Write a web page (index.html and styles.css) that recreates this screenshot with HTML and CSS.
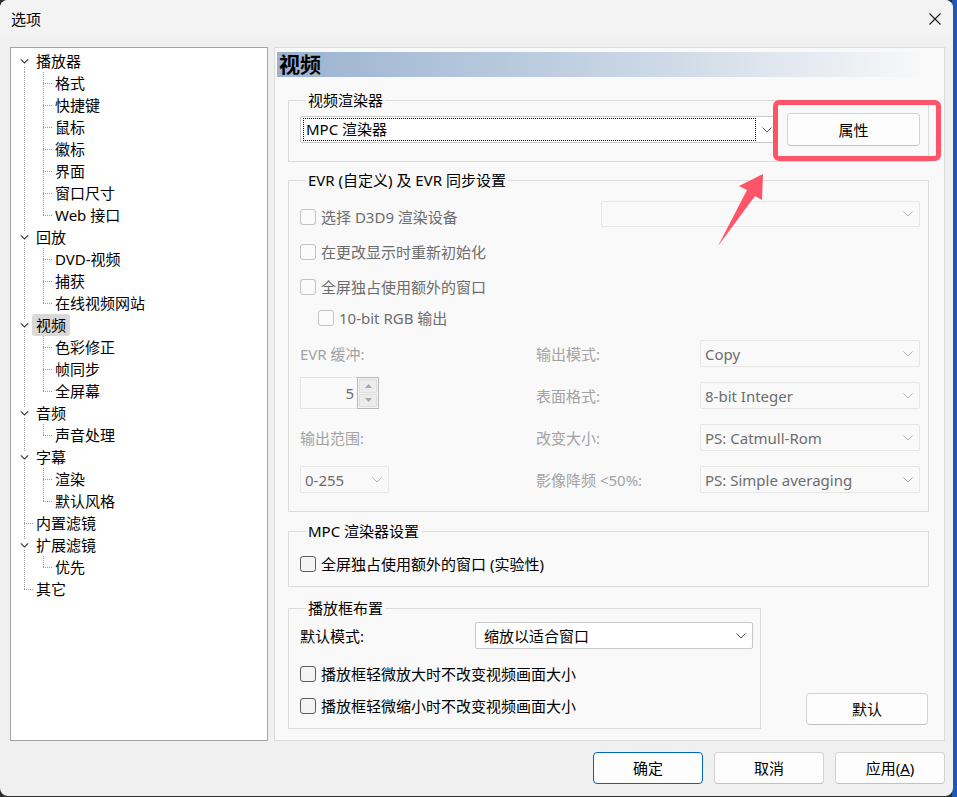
FILE: index.html
```html
<!DOCTYPE html>
<html lang="zh-CN">
<head>
<meta charset="utf-8">
<title>选项</title>
<link rel="stylesheet" href="styles.css">
</head>
<body>
<div class="window">
  <div class="titlebar">
    <span class="title">选项</span>
    <svg class="close" width="12" height="12" viewBox="0 0 12 12"><path d="M0.5 0.5 L11.5 11.5 M11.5 0.5 L0.5 11.5" stroke="#1a1a1a" stroke-width="1.1" fill="none"/></svg>
  </div>

  <div class="main">
    <div class="tree">
      <div class="row r-exp first"><span class="gut"><svg class="chev" width="9" height="10" viewBox="0 0 9 10"><path d="M0.8 3.3 L4.5 7 L8.2 3.3" stroke="#3c3c3c" stroke-width="1.2" fill="none"/></svg></span><span class="lbl">播放器</span></div>
      <div class="row r-child"><span class="lbl">格式</span></div>
      <div class="row r-child"><span class="lbl">快捷键</span></div>
      <div class="row r-child"><span class="lbl">鼠标</span></div>
      <div class="row r-child"><span class="lbl">徽标</span></div>
      <div class="row r-child"><span class="lbl">界面</span></div>
      <div class="row r-child"><span class="lbl">窗口尺寸</span></div>
      <div class="row r-child last"><span class="lbl">Web 接口</span></div>
      <div class="row r-exp"><span class="gut"><svg class="chev" width="9" height="10" viewBox="0 0 9 10"><path d="M0.8 3.3 L4.5 7 L8.2 3.3" stroke="#3c3c3c" stroke-width="1.2" fill="none"/></svg></span><span class="lbl">回放</span></div>
      <div class="row r-child"><span class="lbl">DVD-视频</span></div>
      <div class="row r-child"><span class="lbl">捕获</span></div>
      <div class="row r-child last"><span class="lbl">在线视频网站</span></div>
      <div class="row r-exp sel"><span class="gut"><svg class="chev" width="9" height="10" viewBox="0 0 9 10"><path d="M0.8 3.3 L4.5 7 L8.2 3.3" stroke="#3c3c3c" stroke-width="1.2" fill="none"/></svg></span><span class="lbl">视频</span></div>
      <div class="row r-child"><span class="lbl">色彩修正</span></div>
      <div class="row r-child"><span class="lbl">帧同步</span></div>
      <div class="row r-child last"><span class="lbl">全屏幕</span></div>
      <div class="row r-exp"><span class="gut"><svg class="chev" width="9" height="10" viewBox="0 0 9 10"><path d="M0.8 3.3 L4.5 7 L8.2 3.3" stroke="#3c3c3c" stroke-width="1.2" fill="none"/></svg></span><span class="lbl">音频</span></div>
      <div class="row r-child last"><span class="lbl">声音处理</span></div>
      <div class="row r-exp"><span class="gut"><svg class="chev" width="9" height="10" viewBox="0 0 9 10"><path d="M0.8 3.3 L4.5 7 L8.2 3.3" stroke="#3c3c3c" stroke-width="1.2" fill="none"/></svg></span><span class="lbl">字幕</span></div>
      <div class="row r-child"><span class="lbl">渲染</span></div>
      <div class="row r-child last"><span class="lbl">默认风格</span></div>
      <div class="row r-leaf"><span class="lbl">内置滤镜</span></div>
      <div class="row r-exp"><span class="gut"><svg class="chev" width="9" height="10" viewBox="0 0 9 10"><path d="M0.8 3.3 L4.5 7 L8.2 3.3" stroke="#3c3c3c" stroke-width="1.2" fill="none"/></svg></span><span class="lbl">扩展滤镜</span></div>
      <div class="row r-child last"><span class="lbl">优先</span></div>
      <div class="row r-leaf end"><span class="lbl">其它</span></div>
    </div>

    <div class="page">
      <div class="page-header">视频</div>

      <fieldset class="group g-renderer">
        <legend>视频渲染器</legend>
        <div class="renderer-row">
          <div class="combo combo-white combo-main">
            <span class="focus-text">MPC 渲染器</span>
            <svg class="chevron" width="10" height="6" viewBox="0 0 10 6"><path d="M0.5 0.5 L5 5 L9.5 0.5" stroke="#606060" stroke-width="1" fill="none"/></svg>
          </div>
          <button class="btn btn-prop">属性</button>
        </div>
      </fieldset>

      <fieldset class="group g-evr">
        <legend>EVR (自定义) 及 EVR 同步设置</legend>
        <div class="evr-row1">
          <label class="check dis"><span class="box"></span>选择 D3D9 渲染设备</label>
          <div class="combo combo-dis combo-d3d">
            <span class="combo-text"></span>
            <svg class="chevron" width="10" height="6" viewBox="0 0 10 6"><path d="M0.5 0.5 L5 5 L9.5 0.5" stroke="#b4b4b4" stroke-width="1" fill="none"/></svg>
          </div>
        </div>
        <label class="check dis c2"><span class="box"></span>在更改显示时重新初始化</label>
        <label class="check dis c3"><span class="box"></span>全屏独占使用额外的窗口</label>
        <label class="check dis c4"><span class="box"></span>10-bit RGB 输出</label>

        <div class="evr-grid">
          <span class="slabel">EVR 缓冲:</span>
          <span class="slabel">输出模式:</span>
          <div class="combo combo-dis"><span class="combo-text">Copy</span><svg class="chevron" width="10" height="6" viewBox="0 0 10 6"><path d="M0.5 0.5 L5 5 L9.5 0.5" stroke="#b4b4b4" stroke-width="1" fill="none"/></svg></div>

          <div class="spin">
            <span class="spin-val">5</span>
            <span class="spin-btns">
              <span class="sb"><svg width="7" height="4" viewBox="0 0 7 4"><path d="M0 4 L3.5 0 L7 4 Z" fill="#a8a8a8"/></svg></span>
              <span class="sb"><svg width="7" height="4" viewBox="0 0 7 4"><path d="M0 0 L3.5 4 L7 0 Z" fill="#a8a8a8"/></svg></span>
            </span>
          </div>
          <span class="slabel">表面格式:</span>
          <div class="combo combo-dis"><span class="combo-text">8-bit Integer</span><svg class="chevron" width="10" height="6" viewBox="0 0 10 6"><path d="M0.5 0.5 L5 5 L9.5 0.5" stroke="#b4b4b4" stroke-width="1" fill="none"/></svg></div>

          <span class="slabel">输出范围:</span>
          <span class="slabel">改变大小:</span>
          <div class="combo combo-dis"><span class="combo-text">PS: Catmull-Rom</span><svg class="chevron" width="10" height="6" viewBox="0 0 10 6"><path d="M0.5 0.5 L5 5 L9.5 0.5" stroke="#b4b4b4" stroke-width="1" fill="none"/></svg></div>

          <div class="combo combo-dis combo-range"><span class="combo-text">0-255</span><svg class="chevron" width="10" height="6" viewBox="0 0 10 6"><path d="M0.5 0.5 L5 5 L9.5 0.5" stroke="#b4b4b4" stroke-width="1" fill="none"/></svg></div>
          <span class="slabel">影像降频 &lt;50%:</span>
          <div class="combo combo-dis"><span class="combo-text">PS: Simple averaging</span><svg class="chevron" width="10" height="6" viewBox="0 0 10 6"><path d="M0.5 0.5 L5 5 L9.5 0.5" stroke="#b4b4b4" stroke-width="1" fill="none"/></svg></div>
        </div>
      </fieldset>

      <fieldset class="group g-mpc">
        <legend>MPC 渲染器设置</legend>
        <label class="check"><span class="box"></span>全屏独占使用额外的窗口 (实验性)</label>
      </fieldset>

      <div class="bottom-row">
        <fieldset class="group g-layout">
          <legend>播放框布置</legend>
          <div class="layout-row">
            <span class="flabel">默认模式:</span>
            <div class="combo combo-white combo-mode">
              <span class="combo-text">缩放以适合窗口</span>
              <svg class="chevron" width="10" height="6" viewBox="0 0 10 6"><path d="M0.5 0.5 L5 5 L9.5 0.5" stroke="#505050" stroke-width="1" fill="none"/></svg>
            </div>
          </div>
          <label class="check l2"><span class="box"></span>播放框轻微放大时不改变视频画面大小</label>
          <label class="check l3"><span class="box"></span>播放框轻微缩小时不改变视频画面大小</label>
        </fieldset>
        <button class="btn btn-default">默认</button>
      </div>
    </div>
  </div>

  <div class="footer">
    <button class="btn btn-foot btn-ok">确定</button>
    <button class="btn btn-foot">取消</button>
    <button class="btn btn-foot">应用(<u>A</u>)</button>
  </div>

  <div class="highlight"></div>
  <svg class="arrow" width="52" height="80" viewBox="0 0 52 80">
    <polygon points="48,4 24,16 32,20 3,76 40,26 47,30" fill="#fe5468"/>
  </svg>
</div>
</body>
</html>
```

FILE: styles.css
```css
:root {
  --dv: repeating-linear-gradient(to bottom, #9a9a9a 0 1px, transparent 1px 2px);
  --dh: repeating-linear-gradient(to right, #9a9a9a 0 1px, transparent 1px 2px);
}

* { box-sizing: border-box; }

html, body {
  margin: 0;
  padding: 0;
}

body {
  width: 957px;
  height: 797px;
  overflow: hidden;
  background: linear-gradient(to right, #2c2c2c 0 952px, #1d59b3 952px);
  font-family: "Noto Sans", "Noto Sans CJK SC", sans-serif;
  font-size: 15px;
  color: #000;
}

.window {
  position: relative;
  width: 953px;
  height: 796px;
  background: #f0f0f0;
  border-radius: 8px;
  overflow: hidden;
  display: flex;
  flex-direction: column;
}

/* title bar */
.titlebar {
  height: 38px;
  flex: none;
  background: #f3f3f3;
  display: flex;
  align-items: center;
  justify-content: space-between;
  padding: 0 12px 0 11px;
}
.title { font-size: 15px; line-height: 20px; }
.close { display: block; }

/* main area */
.main {
  flex: none;
  height: 703px;
  padding: 9px 8px 0 10px;
  display: flex;
  gap: 6px;
}

/* tree */
.tree {
  width: 258px;
  height: 694px;
  background: #fff;
  border: 1px solid #a3a3a3;
  padding-top: 2px;
}
.row {
  height: 22px;
  display: flex;
  align-items: center;
  background-repeat: no-repeat;
  line-height: 22px;
  white-space: nowrap;
}
.lbl {
  padding: 0 4px;
  border-radius: 3px;
  height: 22px;
}
.sel .lbl { background: #d9d9d9; }

.r-exp {
  background: var(--dv) 13px 0 / 1px 100% no-repeat;
}
.r-exp.first {
  background: var(--dv) 13px 15px / 1px 7px no-repeat;
}
.gut {
  width: 21px;
  display: flex;
  padding-left: 9px;
}
.chev { display: block; background: #fff; }

.r-leaf {
  padding-left: 21px;
  background:
    var(--dv) 13px 0 / 1px 100% no-repeat,
    var(--dh) 13px 11px / 9px 1px no-repeat;
}
.r-leaf.end {
  background:
    var(--dv) 13px 0 / 1px 12px no-repeat,
    var(--dh) 13px 11px / 9px 1px no-repeat;
}
.r-child {
  padding-left: 40px;
  background:
    var(--dv) 13px 0 / 1px 100% no-repeat,
    var(--dv) 32px 0 / 1px 100% no-repeat,
    var(--dh) 32px 11px / 9px 1px no-repeat;
}
.r-child.last {
  background:
    var(--dv) 13px 0 / 1px 100% no-repeat,
    var(--dv) 32px 0 / 1px 12px no-repeat,
    var(--dh) 32px 11px / 9px 1px no-repeat;
}

/* right page */
.page {
  width: 671px;
  height: 694px;
  background: #f9f9f9;
  border: 1px solid #dcdcdc;
  padding: 4px 15px 0 13px;
}
.page-header {
  margin-left: -11px;
  height: 25px;
  padding-left: 2px;
  background: linear-gradient(to right, #9ab2d0 0%, #c9d6e5 55%, #f9f9f9 100%);
  font-size: 21px;
  font-weight: bold;
  line-height: 25px;
  color: #000;
}

.group {
  margin: 0;
  padding: 0 8px 0 11px;
  border: 1px solid #dcdcdc;
  min-width: 0;
}
.group legend {
  margin-left: 6px;
  padding: 0 2px;
  line-height: 20px;
  height: 20px;
  font-size: 15px;
}

.g-renderer {
  margin-top: 13px;
  padding-top: 3px;
  padding-bottom: 15px;
}
.renderer-row {
  display: flex;
  align-items: center;
  gap: 9px;
}

/* combos */
.combo {
  height: 27px;
  display: flex;
  align-items: center;
  border: 1px solid #d8d8d8;
  border-radius: 2px;
  padding: 0 6px 0 3px;
  line-height: 20px;
  white-space: nowrap;
}
.combo .chevron { display: block; flex: none; margin-left: auto; }
.combo-text { flex: 1; padding-left: 1px; }
.combo-white { background: #fff; border-color: #c8c8c8; }
.combo-dis { background: #f9f9f9; border-color: #e6e6e6; color: #6d6d6d; }
.combo-main {
  width: 478px;
  padding: 1px 5px 1px 2px;
}
.focus-text {
  flex: none;
  width: 453px;
  height: 23px;
  border: 1px dotted #000;
  padding-left: 2px;
  line-height: 21px;
}
.btn {
  font-family: inherit;
  font-size: 15px;
  color: #000;
  background: #fdfdfd;
  border: 1px solid #d3d3d3;
  border-bottom-color: #c2c2c2;
  border-radius: 4px;
  padding: 0;
  line-height: 20px;
}
.btn-prop { width: 133px; height: 33px; }

/* EVR group */
.g-evr {
  margin-top: 8px;
  padding-top: 11px;
  padding-bottom: 18px;
}
.evr-row1 {
  display: flex;
  justify-content: space-between;
  align-items: flex-start;
}
.evr-row1 .check { margin-top: 6px; }
.combo-d3d { width: 319px; height: 26px; }

.check {
  display: flex;
  align-items: center;
  gap: 5px;
  height: 20px;
  line-height: 20px;
  white-space: nowrap;
}
.box {
  width: 16px;
  height: 16px;
  flex: none;
  border: 1px solid #5e5e5e;
  border-radius: 3px;
  background: #f4f4f4;
}
.check.dis { color: #6d6d6d; }
.check.dis .box { border-color: #c4c4c4; background: #fbfbfb; }
.c2 { margin-top: 15px; }
.c3 { margin-top: 15px; }
.c4 { margin-top: 11px; padding-left: 18px; }

.evr-grid {
  margin-top: 12px;
  display: grid;
  grid-template-columns: 236px 164px 220px;
  grid-template-rows: repeat(4, 27px);
  row-gap: 15px;
  align-items: center;
}
.slabel { color: #a3a3a3; line-height: 20px; white-space: nowrap; }

.spin {
  align-self: end;
  width: 79px;
  height: 32px;
  display: flex;
  border: 1px solid #e3e3e3;
  background: #fafafa;
}
.spin-val {
  flex: 1;
  text-align: right;
  padding-right: 3px;
  line-height: 30px;
  color: #6d6d6d;
}
.spin-btns {
  width: 22px;
  display: flex;
  flex-direction: column;
  border: 1px solid #b9b9b9;
  margin: -1px -1px -1px 0;
  padding: 1px;
  gap: 1px;
  background: #f3f3f3;
}
.sb {
  flex: 1;
  display: flex;
  align-items: center;
  justify-content: center;
  background: #ececec;
  border: 1px solid #dedede;
}
.sb svg { display: block; }
.combo-range { width: 89px; }

/* MPC group */
.g-mpc {
  margin-top: 9px;
  padding-top: 13px;
  padding-bottom: 12px;
}

/* bottom row */
.bottom-row {
  margin-top: 11px;
  display: flex;
  justify-content: space-between;
  align-items: flex-end;
}
.g-layout {
  width: 473px;
  padding: 4px 7px 12px 11px;
}
.layout-row {
  display: flex;
  justify-content: space-between;
  align-items: center;
}
.flabel { line-height: 20px; }
.combo-mode { width: 278px; padding-left: 7px; }
.l2 { margin-top: 15px; }
.l3 { margin-top: 12px; }
.btn-default {
  width: 122px;
  height: 32px;
  margin: 0 1px 4px 0;
}

/* footer */
.footer {
  margin-top: 11px;
  display: flex;
  justify-content: flex-end;
  gap: 11px;
  padding-right: 8px;
}
.btn-foot { width: 110px; height: 32px; }
.btn-ok { border-color: #0067c0; }

/* annotation overlay */
.highlight {
  position: absolute;
  left: 773px;
  top: 100px;
  width: 168px;
  height: 61px;
  border: 5px solid #fe5468;
  border-radius: 6px;
}
.arrow {
  position: absolute;
  left: 715px;
  top: 170px;
}
```
